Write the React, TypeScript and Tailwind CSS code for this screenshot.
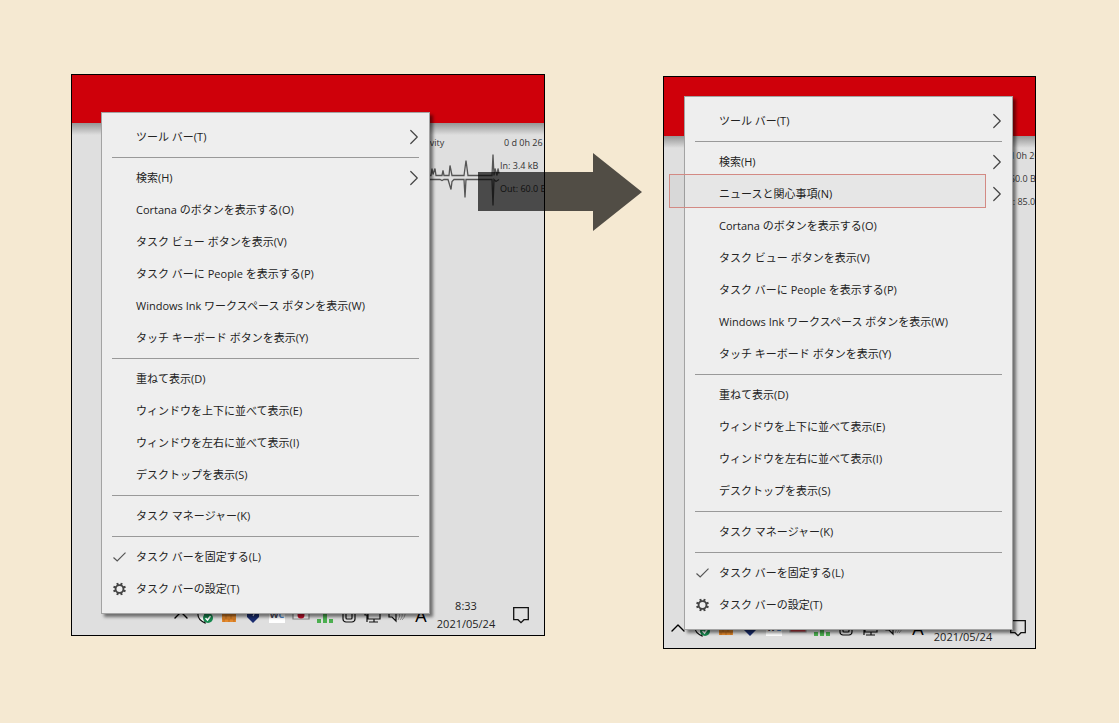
import { ChevronRight, ChevronUp } from "lucide-react";
import type { ReactNode } from "react";

type Item = { label: string; icon?: "check" | "gear"; sub?: boolean; marked?: boolean };

const search: Item = { label: "検索(H)", sub: true };
const news: Item = { label: "ニュースと関心事項(N)", sub: true, marked: true };
const taskbarButtons: Item[] = [
  { label: "Cortana のボタンを表示する(O)" },
  { label: "タスク ビュー ボタンを表示(V)" },
  { label: "タスク バーに People を表示する(P)" },
  { label: "Windows Ink ワークスペース ボタンを表示(W)" },
  { label: "タッチ キーボード ボタンを表示(Y)" },
];
const commonGroups: Item[][] = [
  [
    { label: "重ねて表示(D)" },
    { label: "ウィンドウを上下に並べて表示(E)" },
    { label: "ウィンドウを左右に並べて表示(I)" },
    { label: "デスクトップを表示(S)" },
  ],
  [{ label: "タスク マネージャー(K)" }],
  [
    { label: "タスク バーを固定する(L)", icon: "check" },
    { label: "タスク バーの設定(T)", icon: "gear" },
  ],
];

const beforeMenu: Item[][] = [[{ label: "ツール バー(T)", sub: true }], [search, ...taskbarButtons], ...commonGroups];
const afterMenu: Item[][] = [[{ label: "ツール バー(T)", sub: true }], [search, news, ...taskbarButtons], ...commonGroups];

function CheckIcon() {
  return (
    <svg width="14" height="14" viewBox="0 0 14 14" fill="none" stroke="#555" strokeWidth="1.2">
      <path d="M1.5 7.5 5.2 11 13.5 2.7" />
    </svg>
  );
}

function GearIcon() {
  return (
    <svg width="14" height="14" viewBox="0 0 14 14" fill="none" stroke="#444">
      <circle cx="7.5" cy="7" r="3.9" strokeWidth="1.8" />
      <g strokeWidth="2">
        <path d="M6 3.2 5.2 1M9 3.2 9.8 1M6 10.8 5.2 13M9 10.8l.8 2.2" />
        <path d="M3.7 5.5 1.5 4.7M3.7 8.5l-2.2.8M11.3 5.5l2.2-.8M11.3 8.5l2.2.8" />
      </g>
    </svg>
  );
}

function ContextMenu({ groups, className }: { groups: Item[][]; className: string }) {
  return (
    <div
      role="menu"
      className={`relative col-start-1 row-start-1 w-[329px] border border-[#a3a3a3] bg-[#eeeeee] py-2 shadow-[3px_3px_3px_rgba(0,0,0,0.5)] ${className}`}
    >
      {groups.map((group, i) => (
        <div key={i} role="group">
          {i > 0 && <hr className="mx-[10px] my-1 border-t border-[#999]" />}
          {group.map((item) => (
            <button
              key={item.label}
              role="menuitem"
              className="relative flex h-8 w-full items-center pr-[10px] pl-[10px] text-left text-[11px] whitespace-nowrap text-[#222]"
            >
              <span className="w-6 shrink-0">
                {item.icon === "check" && <CheckIcon />}
                {item.icon === "gear" && <GearIcon />}
              </span>
              <span className="flex-1">{item.label}</span>
              {item.sub && <ChevronRight size={26} strokeWidth={1.2} absoluteStrokeWidth className="-mr-2 text-[#444]" />}
              {item.marked && (
                <span className="absolute -top-1 -left-4 h-[34px] w-[317px] border border-[#d38a84] bg-black/3" />
              )}
            </button>
          ))}
        </div>
      ))}
    </div>
  );
}

function TrayIcon({ children }: { children: ReactNode }) {
  return (
    <svg width="24" height="18" viewBox="-12 -9 24 18" fill="none" stroke="#111" strokeWidth="1.2">
      {children}
    </svg>
  );
}

function Tray({ alert, className }: { alert?: boolean; className: string }) {
  return (
    <div className={`flex h-10 items-center justify-end ${className}`}>
      <span className="flex w-6 justify-center">
        <ChevronUp size={24} strokeWidth={1.4} absoluteStrokeWidth className="shrink-0 text-black" />
      </span>
      <TrayIcon>
        <path d="M0-8-7-5v5c0 4 3 6 7 8z" fill="#fff" />
        <circle cx="3" cy="3" r="5" fill="#16894f" stroke="none" />
        <path d="m.5 3 2 2 3-4" stroke="#fff" strokeWidth="1.5" />
      </TrayIcon>
      <TrayIcon>
        <path d="M-7-5H7V7H-7z" fill="#e58a2e" stroke="none" />
        <path d="M-7 0H7M-7 4H7M-3 0v4M2 0v4M-5 4v3M0 4v3M5 4v3" stroke="#b96a20" strokeWidth=".8" />
      </TrayIcon>
      <TrayIcon>
        <path d="M-6-6H6v8L0 8-6 2z" fill="#1b2d70" stroke="none" />
        <path d="M-2-2c0-3 5-2 3 1L0 1" stroke="#dce2f2" />
      </TrayIcon>
      <span className="flex w-6 justify-center">
        <span className="h-4 w-4 bg-white text-center text-[9px] leading-4 font-bold text-[#445]">
          W<span className="text-[#4f86cc]">C</span>
        </span>
      </span>
      <TrayIcon>
        {alert ? (
          <path d="M-8-6H8V4H-8z" fill="#c93a44" stroke="#999" />
        ) : (
          <>
            <path d="M-8-6H8V4H-8z" fill="#fff" stroke="#888" />
            <circle r="3.5" fill="#c8102e" stroke="none" />
          </>
        )}
      </TrayIcon>
      <TrayIcon>
        <path d="M-8 4h4v4h-4zM-2-4h4V8h-4zM4 4h4v4H4z" fill="#4caf50" stroke="none" />
      </TrayIcon>
      <TrayIcon>
        <rect x="-6" y="-7" width="12" height="14" rx="3" />
        <rect x="-3" y="-5" width="6" height="9" rx="1" />
      </TrayIcon>
      <TrayIcon>
        <path d="M-5-5H7V4H-5zM1 4v3M-4 7H5M-8-3v3h3M-6 0v7" />
      </TrayIcon>
      <TrayIcon>
        <path d="M-8-3v5h3l4 4V-6l-4 3z" />
        <path d="M2-3q2 4-1 8M4-5q3 6-1 10M7-6q3 6-2 11" stroke="#888" strokeWidth=".9" />
      </TrayIcon>
      <span className="w-6 text-center text-[18px] leading-5 text-black">A</span>
      <time className="mr-4 ml-[2px] w-[62px] text-center text-[11px] leading-[18px] whitespace-nowrap text-[#222]">
        8:33
        <br />
        2021/05/24
      </time>
      <svg width="16" height="18" viewBox="0 0 16 18" fill="none" stroke="#111" strokeWidth="1.3">
        <path d="M.7 1.7h14.6v12h-4.3l-3 3-3-3H.7z" />
      </svg>
    </div>
  );
}

function NetworkActivity({ received, sent, className }: { received: string; sent: string; className: string }) {
  return (
    <div className="flex justify-end overflow-hidden pt-0.5 text-[9px] leading-[12px] whitespace-nowrap text-[#333]">
      <div className="w-[130px] shrink-0">
        <p className="pl-[6px]">Network Activity</p>
        <svg width="130" height="62" viewBox="0 0 130 62" fill="none" stroke="#555" strokeWidth="1.3">
          <path d="M40 26.5h21l1-7 1 6 2-6 1 7h6l1-5 1 5h5l1-10 2 10h12l2-15 2 15h24l1-21 1 21 1-7 2 7 1-7 1 5" />
          <path d="M40 30.5h30l2 1 2-1h4l3 10 1-8 2-2h10l1 18 1-18h26l1 26 1-26 2 2 3-2" />
        </svg>
      </div>
      <div className={`flex shrink-0 flex-col gap-[11px] ${className}`}>
        <p className="pl-1">0 d 0h 26</p>
        <p>In: {received}</p>
        <p>Out: {sent}</p>
      </div>
    </div>
  );
}

function Desktop({ banner, children }: { banner: string; children: ReactNode }) {
  return (
    <div className="col-start-1 row-start-1 flex min-w-0 flex-col overflow-hidden">
      <div className={`bg-[#cf000a] ${banner}`} />
      <div className="h-3 bg-linear-to-b from-[#969696] to-[#dfdfdf]" />
      {children}
    </div>
  );
}

export default function App() {
  return (
    <main className="min-h-screen bg-[#f5e9d2] pt-[74px] pr-[83px] pb-[74px] pl-[71px] font-['Open_Sans','Noto_Sans_CJK_JP',sans-serif]">
      <div className="grid grid-cols-[474fr_373fr] items-start gap-x-[118px]">
        <section className="relative grid border border-black bg-[#dfdfdf]">
          <Desktop banner="h-12">
            <NetworkActivity received="3.4 kB" sent="60.0 B" className="w-[44px]" />
            <Tray className="mt-auto pr-[15px]" />
          </Desktop>
          <ContextMenu groups={beforeMenu} className="mt-[37px] mb-[21px] ml-[29px]" />
          <svg
            width="164"
            height="78"
            viewBox="0 0 164 78"
            className="absolute top-[78px] -right-[98px] z-10 fill-black/67"
          >
            <path d="M0 19h115V0l49 39-49 39V58H0z" />
          </svg>
        </section>

        <section className="mt-[2px] grid border border-black bg-[#dfdfdf]">
          <Desktop banner="h-[59px]">
            <NetworkActivity received="60.0 B" sent="85.0 B" className="w-[38px]" />
            <Tray alert className="mt-auto pr-[9px]" />
          </Desktop>
          <ContextMenu groups={afterMenu} className="mt-[19px] mb-[18px] ml-5" />
        </section>
      </div>
    </main>
  );
}
